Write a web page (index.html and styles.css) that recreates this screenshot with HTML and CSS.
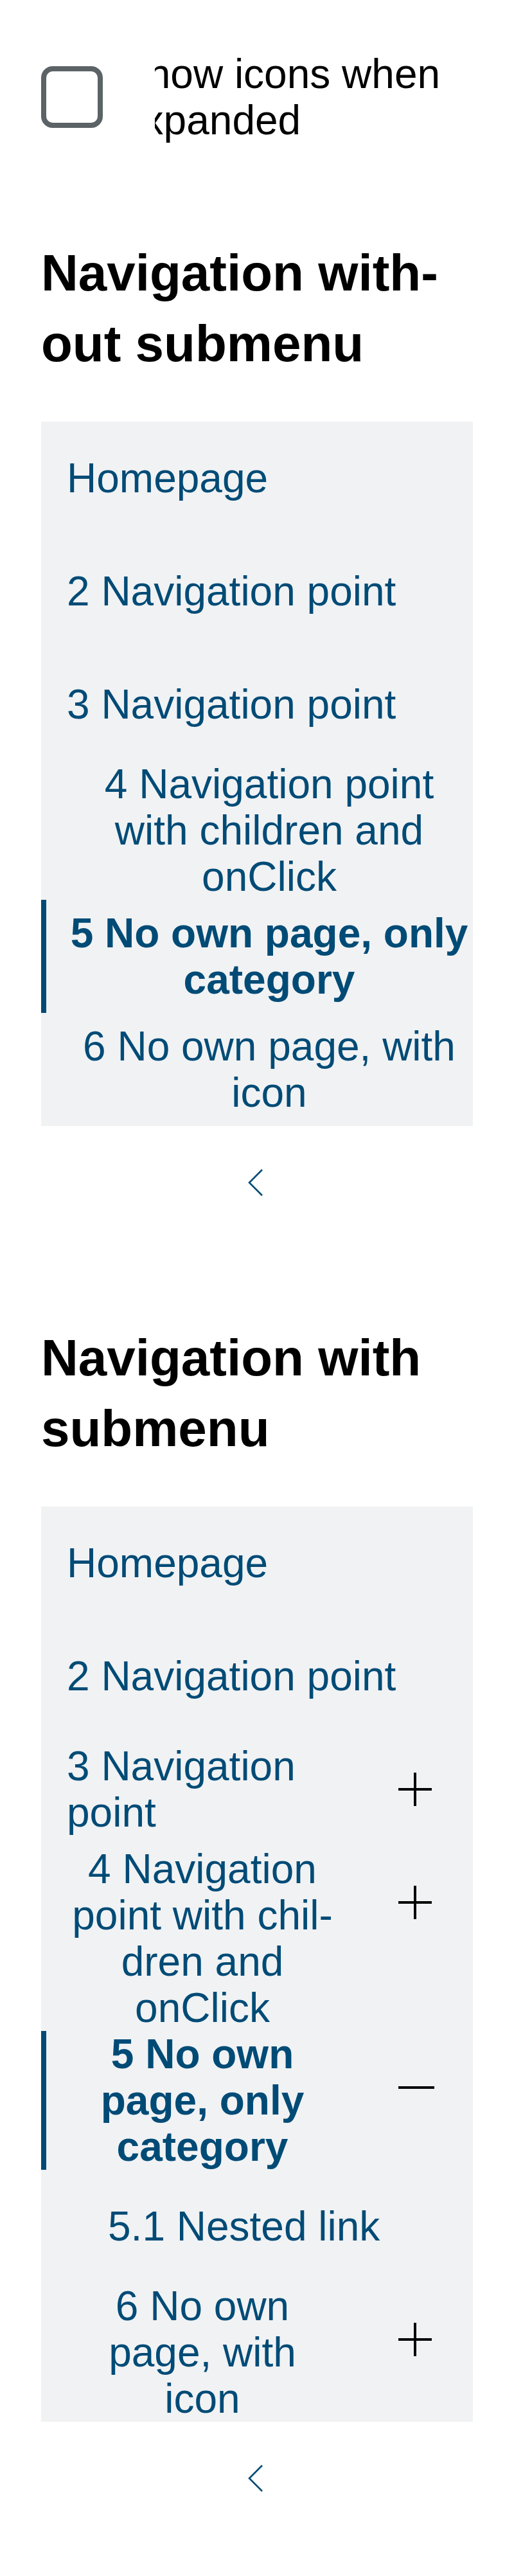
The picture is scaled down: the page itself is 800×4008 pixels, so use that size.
FILE: index.html
```html
<!DOCTYPE html>
<html lang="en">
<head>
<meta charset="utf-8">
<title>Navigation</title>
<link rel="stylesheet" href="styles.css">
</head>
<body>
<main class="page">
  <label class="option">
    <span class="option-box"></span>
    <span class="option-text">Show icons when expanded</span>
  </label>

  <section class="demo">
    <h2 class="demo-title">Navigation with&shy;out submenu</h2>
    <nav class="nav">
      <ul class="nav-list">
        <li class="nav-item"><div class="nav-entry"><a class="nav-link" href="#">Homepage</a></div></li>
        <li class="nav-item"><div class="nav-entry"><a class="nav-link" href="#">2 Navigation point</a></div></li>
        <li class="nav-item"><div class="nav-entry"><a class="nav-link" href="#">3 Navigation point</a></div></li>
        <li class="nav-item"><div class="nav-entry"><button class="nav-button" type="button">4 Navigation point with children and onClick</button></div></li>
        <li class="nav-item is-active"><div class="nav-entry"><button class="nav-button" type="button">5 No own page, only category</button></div></li>
        <li class="nav-item"><div class="nav-entry"><button class="nav-button" type="button">6 No own page, with icon</button></div></li>
      </ul>
    </nav>
    <div class="nav-footer">
      <button class="collapse" type="button" aria-label="Collapse">
        <svg class="collapse-icon" viewBox="0 0 48 48" width="48" height="48"><polyline points="32,4 12,24 32,44" fill="none" stroke="#004b76" stroke-width="2.6"/></svg>
      </button>
    </div>
  </section>

  <section class="demo demo-next">
    <h2 class="demo-title">Navigation with submenu</h2>
    <nav class="nav">
      <ul class="nav-list">
        <li class="nav-item"><div class="nav-entry"><a class="nav-link" href="#">Homepage</a></div></li>
        <li class="nav-item"><div class="nav-entry"><a class="nav-link" href="#">2 Navigation point</a></div></li>
        <li class="nav-item">
          <div class="nav-entry has-toggle"><a class="nav-link" href="#">3 Navigation point</a></div>
          <button class="nav-toggle" type="button" aria-label="Expand"><svg viewBox="0 0 64 64" width="64" height="64"><path d="M32 6v52M6 32h52" fill="none" stroke="#000" stroke-width="4"/></svg></button>
        </li>
        <li class="nav-item">
          <div class="nav-entry has-toggle"><button class="nav-button" type="button">4 Navigation point with chil&shy;dren and onClick</button></div>
          <button class="nav-toggle" type="button" aria-label="Expand"><svg viewBox="0 0 64 64" width="64" height="64"><path d="M32 6v52M6 32h52" fill="none" stroke="#000" stroke-width="4"/></svg></button>
        </li>
        <li class="nav-item is-active">
          <div class="nav-entry has-toggle"><button class="nav-button" type="button">5 No own page, only category</button></div>
          <button class="nav-toggle" type="button" aria-label="Collapse"><svg viewBox="0 0 64 64" width="64" height="64"><path d="M6 32h56" fill="none" stroke="#000" stroke-width="4"/></svg></button>
        </li>
        <li class="nav-item is-nested"><div class="nav-entry"><a class="nav-link" href="#">5.1 Nested link</a></div></li>
        <li class="nav-item">
          <div class="nav-entry has-toggle"><button class="nav-button" type="button">6 No own page, with icon</button></div>
          <button class="nav-toggle" type="button" aria-label="Expand"><svg viewBox="0 0 64 64" width="64" height="64"><path d="M32 6v52M6 32h52" fill="none" stroke="#000" stroke-width="4"/></svg></button>
        </li>
      </ul>
    </nav>
    <div class="nav-footer">
      <button class="collapse" type="button" aria-label="Collapse">
        <svg class="collapse-icon" viewBox="0 0 48 48" width="48" height="48"><polyline points="32,4 12,24 32,44" fill="none" stroke="#004b76" stroke-width="2.6"/></svg>
      </button>
    </div>
  </section>
</main>
</body>
</html>
```

FILE: styles.css
```css
html, body {
  margin: 0;
  padding: 0;
  background: #ffffff;
}

body {
  font-family: "Liberation Sans", Arial, sans-serif;
  color: #000000;
}

.page {
  padding: 79px 64px 0;
}

.option {
  display: flex;
  align-items: center;
  font-size: 64px;
  line-height: 72px;
}

.option-box {
  flex: none;
  width: 96px;
  height: 96px;
  box-sizing: border-box;
  border: 8px solid #5b6366;
  border-radius: 18px;
}

.option-text {
  margin-left: 27px;
  clip-path: inset(0 0 0 54px);
}

.demo-title {
  font-size: 80px;
  line-height: 110px;
  font-weight: 700;
  margin: 147px 0 66px;
}

.demo-next .demo-title {
  margin-top: 194px;
}

.nav {
  background: #f1f2f4;
}

.nav-list {
  list-style: none;
  margin: 0;
  padding: 0;
}

.nav-item {
  display: flex;
  align-items: flex-start;
  border-left: 8px solid transparent;
  color: #004b76;
  font-size: 64px;
  line-height: 72px;
}

.nav-item.is-active {
  border-left-color: #004b76;
  font-weight: 700;
}

.nav-entry {
  flex: 1 1 auto;
  min-width: 0;
  display: flex;
  align-items: center;
  min-height: 176px;
  padding: 0 2px 0 32px;
}

.nav-entry.has-toggle {
  padding-right: 72px;
}

.nav-item.is-nested .nav-entry {
  padding-left: 96px;
}

.nav-link {
  color: inherit;
  text-decoration: none;
}

.nav-button {
  font: inherit;
  color: inherit;
  background: none;
  border: 0;
  padding: 0;
  margin: 0;
  text-align: center;
  cursor: pointer;
}

.nav-toggle {
  flex: none;
  width: 96px;
  height: 176px;
  margin-right: 42px;
  padding: 0;
  border: 0;
  background: none;
  display: flex;
  align-items: center;
  justify-content: center;
}

.nav-toggle svg {
  display: block;
}

.nav-footer {
  display: flex;
  justify-content: center;
  margin-top: 64px;
}

.collapse {
  display: block;
  width: 48px;
  height: 48px;
  padding: 0;
  border: 0;
  background: none;
}

.collapse-icon {
  display: block;
}
```
